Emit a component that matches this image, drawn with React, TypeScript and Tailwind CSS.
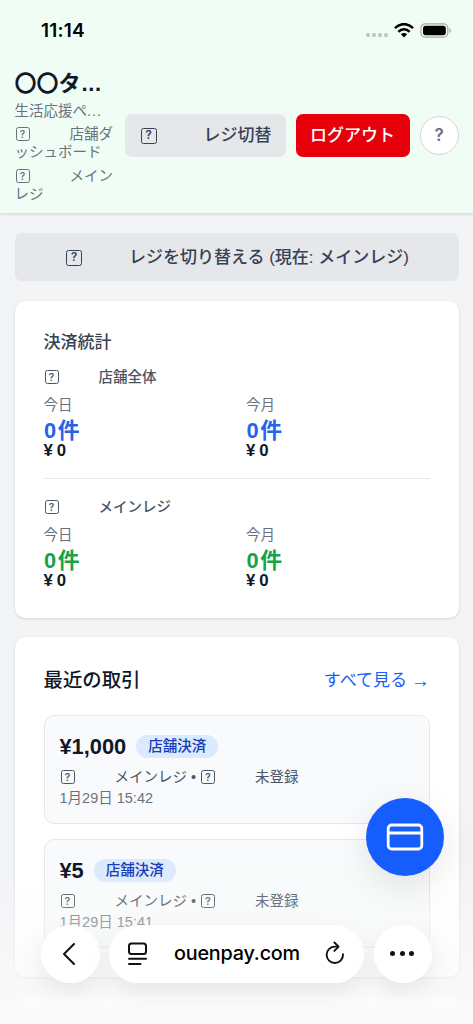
import React from "react";

function Missing({ large = false }: { large?: boolean }) {
  return large ? (
    <span className="mr-[47px] inline-flex h-4 w-4 shrink-0 items-center justify-center rounded-[2.5px] border-[1.5px] border-current font-['Inter',sans-serif] text-[11.5px] leading-none font-semibold">
      ?
    </span>
  ) : (
    <span className="mr-[40px] ml-px inline-flex h-[14px] w-[14px] shrink-0 items-center justify-center rounded-[2.5px] border border-current font-['Inter',sans-serif] text-[10px] leading-none font-semibold">
      ?
    </span>
  );
}

function StatusBar() {
  return (
    <div className="flex h-[60px] items-center justify-between pr-[21px] pl-[41px] text-black">
      <span className="pt-px font-['Inter',sans-serif] text-[19px] leading-6 font-semibold tracking-[0.2px]">11:14</span>
      <div className="flex items-center">
        <div className="mt-[9px] mr-[6px] flex gap-[2px]">
          {[0, 1, 2, 3].map((i) => (
            <span key={i} className="h-[4px] w-[4px] rounded-[1.5px] bg-[#bccac0]" />
          ))}
        </div>
        <svg width="20" height="15" viewBox="0 0 20 15" className="mr-[6px]" fill="none" stroke="#000" strokeWidth="2.6">
          <path d="M1 5.2C6-.2 14-.2 19 5.2" />
          <path d="M4.4 8.8c3.2-3.4 8-3.4 11.2 0" />
          <path d="M10 14.4 6.9 11.2c1.7-1.7 4.5-1.7 6.2 0z" fill="#000" stroke="none" />
        </svg>
        <svg width="32" height="15" viewBox="0 0 32 15">
          <rect x="1" y=".8" width="26.8" height="13.4" rx="4.3" fill="none" stroke="#9eaaa2" strokeWidth="1.2" />
          <rect x="3" y="2.7" width="22.8" height="9.6" rx="2.7" fill="#000" />
          <path d="M29.4 5.2c2 .7 2 3.9 0 4.6z" fill="#9eaaa2" />
        </svg>
      </div>
    </div>
  );
}

function Header() {
  return (
    <header className="h-[213px] shrink-0 bg-[#f0fdf4] shadow-[0_1px_3px_rgba(0,0,0,0.15)]">
      <StatusBar />
      <div className="flex items-center gap-[10px] pt-[9px] pr-[14.5px] pl-[14.5px]">
        <div className="h-[133px] min-w-0 flex-1 text-[14.5px] leading-[18px] text-[#6a7282]">
          <h1 className="h-[30px] text-[22px] leading-[29px] font-bold whitespace-nowrap text-[#101828]">
            〇〇タ<span className="ml-[1px] tracking-[0.6px]">...</span>
          </h1>
          <p className="mt-[3px] whitespace-nowrap">
            生活応援ペ<span className="tracking-[1px]">...</span>
          </p>
          <div className="mt-[5px] whitespace-nowrap">
            <div className="flex h-[18px] items-center">
              <Missing />
              店舗ダ
            </div>
            <div>ッシュボード</div>
          </div>
          <div className="mt-[5.5px] whitespace-nowrap">
            <div className="flex h-[18px] items-center">
              <Missing />
              メイン
            </div>
            <div>レジ</div>
          </div>
        </div>
        <button className="flex h-[43.5px] w-[161px] items-center rounded-[7px] bg-[#e5e7eb] pt-px pl-4 text-[17px] font-medium whitespace-nowrap text-[#364153]">
          <Missing large />
          レジ切替
        </button>
        <button className="h-[43.5px] w-[114px] rounded-[7px] bg-[#e7000b] pt-px text-[17px] font-medium whitespace-nowrap text-white">
          ログアウト
        </button>
        <button className="h-[39px] w-[39px] rounded-full border border-[#d1d5dc] bg-white font-['Inter',sans-serif] text-[17px] font-semibold text-[#6a7282]">
          ?
        </button>
      </div>
    </header>
  );
}

function Stat({ label, count, color }: { label: string; count: string; color: string }) {
  return (
    <div className="w-[202.5px] shrink-0">
      <p className="text-[14.5px] leading-[18px] text-[#6a7282]">{label}</p>
      <p className={`mt-[5px] ml-[0.5px] h-[25px] text-[21.8px] leading-[24px] font-bold ${color}`}>
        {count}
        <span className="ml-[1.5px]">件</span>
      </p>
      <p className="h-[16px] text-[16.8px] leading-[13px] font-bold text-[#101828]">
        ¥<span className="ml-[4px]">0</span>
      </p>
    </div>
  );
}

function StatGroup({ name, color }: { name: string; color: string }) {
  return (
    <div>
      <p className="flex h-[18px] items-center text-[14.5px] leading-[18px] font-medium text-[#4a5565]">
        <Missing />
        {name}
      </p>
      <div className="mt-[10px] flex">
        <Stat label="今日" count="0" color={color} />
        <Stat label="今月" count="0" color={color} />
      </div>
    </div>
  );
}

function Transaction({ amount, time }: { amount: string; time: string }) {
  return (
    <div className="h-[109.5px] shrink-0 rounded-[10px] border border-[#e5e7eb] bg-[#f9fafb] px-[15px] pt-[19px]">
      <div className="flex h-6 items-center gap-[10px]">
        <span className="text-[21.8px] leading-6 font-bold text-[#101828]">{amount}</span>
        <span className="h-[23px] rounded-full bg-[#dbeafe] px-3 text-[14.5px] leading-[22px] font-medium text-[#193cb8]">
          店舗決済
        </span>
      </div>
      <p className="mt-[9px] flex h-[18px] items-center text-[14.5px] leading-[18px] whitespace-nowrap text-[#4a5565]">
        <Missing />
        メインレジ<span className="mx-[4px]">•</span>
        <Missing />
        未登録
      </p>
      <p className="mt-[3px] text-[14.5px] leading-[18px] text-[#6a7282]">{time}</p>
    </div>
  );
}

function BrowserBar() {
  return (
    <div className="absolute inset-x-0 bottom-0 flex h-[120px] items-start justify-center gap-[9.5px] pt-[20.5px] text-black">
      <button className="flex h-[58px] w-[58.5px] items-center justify-center rounded-full bg-white/95 shadow-[0_8px_24px_rgba(0,0,0,0.08)]">
        <svg width="16" height="24" viewBox="0 0 16 24" fill="none" stroke="#111" strokeWidth="2" strokeLinecap="round" strokeLinejoin="round" className="mr-[3px]">
          <path d="M13 2 3 12l10 10" />
        </svg>
      </button>
      <div className="flex h-[58px] w-[255px] items-center rounded-full bg-white/95 pr-[18px] pl-[18px] shadow-[0_8px_24px_rgba(0,0,0,0.08)]">
        <svg width="21" height="24" viewBox="0 0 21 24" fill="none" stroke="#111" strokeWidth="2" strokeLinecap="round">
          <rect x="2" y="1.5" width="17" height="10.5" rx="2.5" />
          <path d="M2 16.8h17M2 21.9h11.5" />
        </svg>
        <span className="flex-1 pt-px pl-[2px] text-center font-['Inter',sans-serif] text-[19.8px] font-medium tracking-[-0.2px]">
          ouenpay.com
        </span>
        <svg width="22" height="25" viewBox="0 0 22 25" fill="none" stroke="#111" strokeWidth="1.9" strokeLinecap="round" strokeLinejoin="round">
          <path d="M19 13.3a8.2 8.2 0 1 1-7.8-7.7h2.6" />
          <path d="m10.4 1.5 4.2 4.2-4.2 4.2" />
        </svg>
      </div>
      <button className="flex h-[58px] w-[58.5px] items-center justify-center gap-[4.5px] rounded-full bg-white/95 pr-[1px] shadow-[0_8px_24px_rgba(0,0,0,0.08)]">
        <span className="h-[5px] w-[5px] rounded-full bg-[#111]" />
        <span className="h-[5px] w-[5px] rounded-full bg-[#111]" />
        <span className="h-[5px] w-[5px] rounded-full bg-[#111]" />
      </button>
    </div>
  );
}

export default function App() {
  return (
    <div className="relative flex h-[1024px] w-[473px] flex-col overflow-hidden bg-[#f3f4f6] font-['Liberation_Sans','Noto_Sans_CJK_JP',sans-serif]">
      <Header />
      <main className="flex flex-col px-[14.5px] pt-5">
        <button className="flex h-[48px] shrink-0 items-center justify-center rounded-[7px] bg-[#e5e7eb] pt-px pl-[2px] text-[17px] font-medium whitespace-nowrap text-[#364153]">
          <Missing large />
          レジを切り替える (現在: メインレジ)
        </button>

        <section className="mt-5 h-[316.5px] shrink-0 rounded-[10px] bg-white px-[29px] pt-[31px] shadow-[0_1px_3px_rgba(0,0,0,0.14)]">
          <h2 className="h-[22px] text-[17px] leading-[22px] font-medium text-[#364153]">決済統計</h2>
          <div className="mt-[14px]">
            <StatGroup name="店舗全体" color="text-[#2563eb]" />
          </div>
          <div className="mt-[18px] border-t border-[#e5e7eb] pt-[19px]">
            <StatGroup name="メインレジ" color="text-[#16a34a]" />
          </div>
        </section>

        <section className="mt-[19.5px] h-[339.5px] shrink-0 rounded-[10px] bg-white px-[29px] pt-[28.5px] shadow-[0_1px_3px_rgba(0,0,0,0.14)]">
          <div className="flex h-[29px] items-center justify-between">
            <h2 className="text-[19.4px] leading-[28px] font-medium text-[#101828]">最近の取引</h2>
            <a className="flex items-center gap-[4px] pt-[2px] text-[17px] leading-[28px] text-[#155dfc]">
              すべて見る <span className="text-[18.5px]">→</span>
            </a>
          </div>
          <div className="mt-[20px] flex flex-col gap-[14.5px]">
            <Transaction amount="¥1,000" time="1月29日 15:42" />
            <Transaction amount="¥5" time="1月29日 15:41" />
          </div>
        </section>

        <section className="mt-[19.5px] h-[80px] shrink-0 rounded-[10px] bg-white" />
      </main>

      <div className="absolute inset-x-0 bottom-0 h-[150px] bg-gradient-to-b from-[#fafafa]/0 via-[#fafafa]/50 to-[#fafafa]/95" />

      <button className="absolute top-[798px] left-[366px] flex h-[78px] w-[78px] items-center justify-center rounded-full bg-[#155dfc] shadow-[0_10px_36px_rgba(0,0,0,0.1)]">
        <svg width="38" height="30" viewBox="0 0 38 30" fill="none" stroke="#fff" strokeWidth="2.8">
          <rect x="2.2" y="3" width="33.6" height="24" rx="3.6" />
          <path d="M2.2 11h33.6" />
        </svg>
      </button>

      <BrowserBar />
    </div>
  );
}
